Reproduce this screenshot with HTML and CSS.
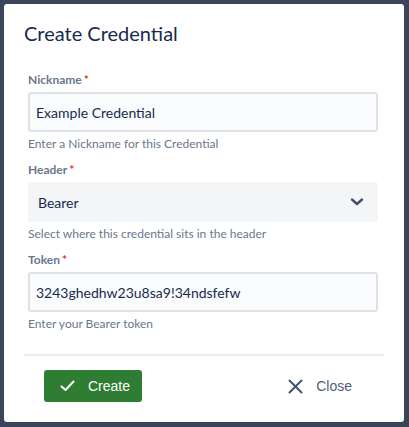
FILE: index.html
```html
<!DOCTYPE html>
<html lang="en">
<head>
<meta charset="utf-8">
<title>Create Credential</title>
<link rel="stylesheet" href="styles.css">
</head>
<body>
<div class="modal">
  <h1 class="title">Create Credential</h1>
  <form class="form">
    <div class="field">
      <label class="label">Nickname<span class="req">*</span></label>
      <div class="input">Example Credential</div>
      <div class="help">Enter a Nickname for this Credential</div>
    </div>
    <div class="field">
      <label class="label">Header<span class="req">*</span></label>
      <div class="select">
        <span>Bearer</span>
        <svg class="chev" width="14" height="10" viewBox="0 0 14 10"><path d="M2 2.5 L7 7 L12 2.5" fill="none" stroke="#42526e" stroke-width="2.4" stroke-linecap="round" stroke-linejoin="round"/></svg>
      </div>
      <div class="help">Select where this credential sits in the header</div>
    </div>
    <div class="field">
      <label class="label">Token<span class="req">*</span></label>
      <div class="input">3243ghedhw23u8sa9!34ndsfefw</div>
      <div class="help">Enter your Bearer token</div>
    </div>
  </form>
  <div class="divider"></div>
  <div class="footer">
    <button class="btn btn-create" type="button">
      <svg width="15" height="12" viewBox="0 0 15 12"><path d="M1.5 6.5 L5.5 10 L13.5 1.5" fill="none" stroke="#fff" stroke-width="2" stroke-linecap="round" stroke-linejoin="round"/></svg>
      <span>Create</span>
    </button>
    <button class="btn btn-close" type="button">
      <svg width="15" height="15" viewBox="0 0 15 15"><path d="M1.5 1.5 L13.5 13.5 M13.5 1.5 L1.5 13.5" fill="none" stroke="#42526e" stroke-width="2" stroke-linecap="round"/></svg>
      <span>Close</span>
    </button>
  </div>
</div>
</body>
</html>
```

FILE: styles.css
```css
* { box-sizing: border-box; }
html, body { margin: 0; padding: 0; }
body {
  background: #3b4559;
  padding: 4px;
  font-family: Lato, "Open Sans", sans-serif;
  color: #172b4d;
  height: 427px;
  overflow: hidden;
}
.modal {
  width: 400px;
  height: 418px;
  background: #ffffff;
  border-radius: 3px;
  padding: 17px 0 0 0;
  display: flex;
  flex-direction: column;
}
.title {
  margin: 0;
  padding: 0 20px;
  font-size: 20px;
  line-height: 24px;
  font-weight: 400;
  color: #172b4d;
}
.form {
  margin: 27px 26px 0 24px;
  display: flex;
  flex-direction: column;
  gap: 10px;
}
.field {
  display: flex;
  flex-direction: column;
}
.label {
  font-size: 12px;
  line-height: 16px;
  font-weight: 700;
  color: #6b778c;
  margin-bottom: 4px;
}
.req {
  color: #de350b;
  margin-left: 2px;
}
.input {
  height: 40px;
  border: 2px solid #dfe1e6;
  background: #fafbfc;
  border-radius: 3px;
  padding: 0 6px;
  display: flex;
  align-items: center;
  font-size: 14px;
  color: #172b4d;
}
.select {
  height: 40px;
  background: #f4f5f7;
  border-radius: 3px;
  padding: 0 14px 0 10px;
  display: flex;
  align-items: center;
  justify-content: space-between;
  font-size: 14px;
  color: #172b4d;
}
.help {
  margin-top: 4px;
  font-size: 12px;
  line-height: 16px;
  color: #6b778c;
}
.divider {
  margin: 22px 20px 0 20px;
  height: 2px;
  background: #ebecf0;
}
.footer {
  display: flex;
  justify-content: space-between;
  align-items: center;
  padding: 14px 40px 0 40px;
}
.btn {
  height: 32px;
  border: none;
  border-radius: 3px;
  display: flex;
  align-items: center;
  font-family: "Liberation Sans", Arial, sans-serif;
  font-size: 14px;
  cursor: pointer;
}
.btn-create {
  width: 98px;
  background: #2e7d32;
  color: #ffffff;
  padding: 0 0 0 16px;
  gap: 13px;
}
.btn-close {
  background: transparent;
  color: #505f79;
  padding: 0 12px;
  gap: 13px;
}
```
